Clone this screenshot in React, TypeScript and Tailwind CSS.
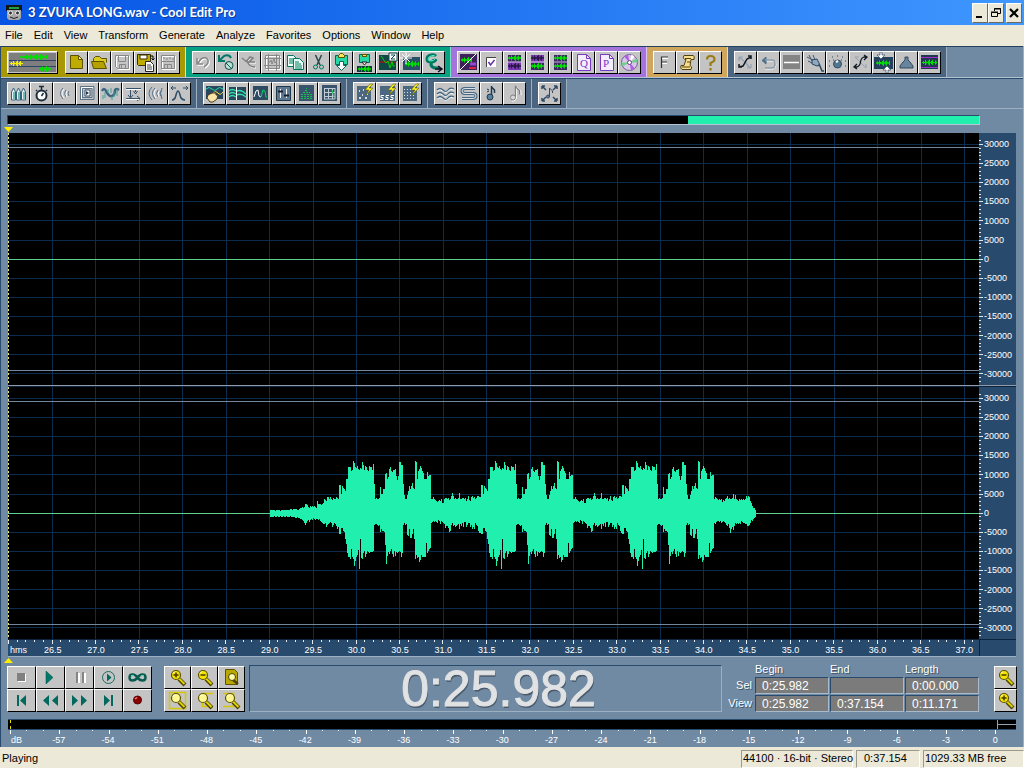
import React from 'react';

/* ---------- data ---------- */

const MENUS = ['File', 'Edit', 'View', 'Transform', 'Generate', 'Analyze', 'Favorites', 'Options', 'Window', 'Help'];

const AMPLITUDES = [30000, 25000, 20000, 15000, 10000, 5000, 0, -5000, -10000, -15000, -20000, -25000, -30000];
const SECONDS = Array.from({ length: 22 }, (_, i) => (26.5 + i * 0.5).toFixed(1));
const DECIBELS = Array.from({ length: 20 }, (_, i) => i * 3 - 57);

// plot geometry, one unit per pixel column
const PLOT_W = 971;
const PLOT_H = 252;
const MID = 126;
const SEC_X = 44;
const SEC_STEP = 43.43;
const AMP_STEP = 19.1;

// peaks above / below the zero line
const INTRO_UP = [3, 3, 3, 3, 3, 2, 3, 3, 3, 3, 2, 3, 3, 3, 3, 3, 3, 3, 3, 3, 4, 4, 3, 4, 4, 4, 4, 3, 3, 4, 5, 5, 6, 5, 6, 9, 9, 8, 6, 5, 7, 6, 7, 6, 7, 6, 5, 12, 9, 9, 9, 8, 9, 10, 14, 13, 12, 16, 16, 14, 16, 14, 13, 15, 14, 14, 16, 15, 14];
const INTRO_DOWN = [2, 2, 2, 2, 1, 2, 2, 1, 2, 2, 1, 2, 2, 1, 2, 2, 1, 2, 2, 2, 1, 2, 2, 2, 2, 3, 3, 2, 3, 3, 4, 4, 5, 6, 8, 10, 8, 6, 5, 7, 5, 4, 5, 3, 4, 5, 4, 4, 5, 4, 6, 7, 8, 9, 9, 8, 12, 10, 9, 8, 7, 8, 12, 10, 8, 9, 11, 14, 12];
const PHRASE_UP = [
  28, 28, 19, 27, 25, 24, 22,
  34, 34, 46, 46, 46, 42, 43, 52, 50, 46, 45, 47, 44, 43, 45, 44, 51, 48, 43, 47, 46, 43, 42, 47, 46, 46, 43, 49,
  29, 14, 15, 14, 14, 15, 26, 19, 19, 24, 24,
  39, 40, 34, 36, 44, 46, 42, 41, 43, 43, 44, 37, 33, 37, 51, 51, 48, 48,
  29, 18, 14, 14, 18, 22, 27, 24, 27, 30, 25,
  24, 52, 51, 34, 42, 44, 47, 45, 42, 40, 34, 34, 34, 41, 37, 38, 38,
  14, 14, 16, 14, 13, 12, 11, 12, 13, 12, 14, 10, 10, 14, 15, 15,
  14, 15, 13, 14, 17, 20, 17, 14, 15, 14, 14, 15, 20, 14, 14, 15, 15, 14, 15, 12, 14, 17, 13, 12, 16, 17, 15, 16, 14, 15, 17, 17, 16, 16,
];
const PHRASE_DOWN = [
  19, 19, 13, 13, 16, 17, 24,
  29, 38, 42, 42, 44, 34, 42, 44, 51, 46, 42, 40, 35, 54, 24, 43, 44, 38, 36, 42, 39, 36, 37, 38, 37, 37, 37, 36,
  10, 9, 9, 10, 11, 10, 17, 14, 16, 16, 17,
  30, 49, 41, 37, 39, 36, 34, 39, 42, 36, 41, 37, 38, 37, 36, 37, 42, 38,
  10, 8, 10, 9, 20, 21, 14, 23, 23, 19, 14,
  24, 44, 40, 43, 42, 47, 45, 40, 42, 42, 42, 42, 28, 38, 36, 34, 33,
  8, 7, 6, 7, 6, 7, 8, 5, 6, 9, 6, 7, 8, 9, 13, 11,
  11, 13, 17, 16, 10, 8, 11, 10, 12, 11, 10, 9, 14, 9, 11, 8, 12, 7, 7, 12, 10, 8, 8, 12, 10, 14, 12, 14, 8, 10, 11, 16, 18, 18,
];
const TAIL_UP = [14, 16, 15, 14, 13, 14, 13, 14, 11, 13, 12, 14, 15, 17, 14, 15, 14, 14, 15, 19, 14, 18, 14, 13, 12, 14, 13, 14, 13, 14, 13, 14, 17, 15, 17, 16, 12, 10, 7, 5, 5, 3];
const TAIL_DOWN = [8, 9, 7, 6, 6, 7, 6, 8, 7, 6, 7, 8, 10, 11, 9, 13, 18, 14, 12, 15, 11, 8, 9, 8, 9, 8, 9, 6, 7, 8, 8, 9, 9, 11, 11, 10, 8, 5, 6, 4, 3, 2];

const PEAKS_UP = [...INTRO_UP, ...PHRASE_UP, ...PHRASE_UP.slice(0, 141), ...PHRASE_UP.slice(0, 92), ...TAIL_UP];
const PEAKS_DOWN = [...INTRO_DOWN, ...PHRASE_DOWN, ...PHRASE_DOWN.slice(0, 141), ...PHRASE_DOWN.slice(0, 92), ...TAIL_DOWN];
const WAVE_PATH = PEAKS_UP.map((up, i) => `M${262.5 + i} ${MID - up}V${MID + 2 + PEAKS_DOWN[i]}`).join('');

/* ---------- icons, drawn on a 21 unit grid ---------- */

const BAR_HEIGHTS = [1, 3, 1, 5, 2, 1, 4, 6, 1, 3, 5, 1, 1, 4, 2, 1];

function Bars({ x, y, n, color = '#00e000' }: { x: number; y: number; n: number; color?: string }) {
  const d = BAR_HEIGHTS.slice(0, n).map((h, i) => `M${x + i + 0.5} ${y - h / 2}v${h}`).join('');
  return (
    <g stroke={color}>
      <path d={d} />
      <path d={`M${x} ${y}h${n}`} />
    </g>
  );
}

function Lens({ sign }: { sign?: '+' | '-' }) {
  return (
    <>
      <path d="M12 12l6 6" stroke="#4a4200" strokeWidth="4" />
      <path d="M12 11.500l5.500 5.500" stroke="#e0d000" strokeWidth="2" />
      <circle cx="9" cy="8" r="4.500" fill={sign ? '#f4e400' : '#fff890'} stroke="#5c5200" strokeWidth="1.200" />
      <path d="M6 6.500l2-2" stroke="#fff" />
      {sign && <path d="M6.500 8h5" stroke="#4a3a00" strokeWidth="1.500" />}
      {sign === '+' && <path d="M9 5.500v5" stroke="#4a3a00" strokeWidth="1.500" />}
    </>
  );
}

const Arcs = ({ heavy }: { heavy?: boolean }) => (
  <g stroke={heavy ? '#52708c' : '#5d7184'}>
    <path d="M12 7q-3 3 0 7M9 5q-5 5 0 11" />
    <path d="M13 8q-2 3 0 6M10 6q-4 4 0 9" stroke="#fff" />
    <path d="M15 8q-2 2 0 5" />
    {heavy && <path d="M6 4q-6 6 0 13M16 5q-3 5 0 11" />}
  </g>
);

const icons: Record<string, React.ReactNode> = {
  new: (
    <>
      <path d="M4.500 3.500h8l4 4v9h-12z" fill="#c0ac00" stroke="#5c5200" />
      <path d="M12.500 3.500v4h4z" fill="#f4ec80" stroke="#5c5200" />
    </>
  ),
  open: (
    <>
      <path d="M4.500 15.500v-9l2-2h4l2 2h5v4" fill="#dccb20" stroke="#5c5200" />
      <path d="M4.500 16.500l-2-7h12l3 7z" fill="#b5a200" stroke="#5c5200" />
    </>
  ),
  save: (
    <>
      <path d="M4.500 4.500h13v13h-11l-2-2z" stroke="#fff" />
      <path d="M3.500 3.500h13v13h-11l-2-2zM6.500 3.500v6h7v-6M7.500 16.500v-4h6v4M9.500 13v3" stroke="#888" />
    </>
  ),
  saveAs: (
    <>
      <path d="M2.500 2.500h13v11h-12l-1-1z" fill="#c0ac00" stroke="#383000" />
      <path d="M5 3h7v4H5z" fill="#fff" stroke="#383000" />
      <path d="M10.500 9.500h5l3 3v7h-8z" fill="#fff" stroke="#222" />
      <path d="M12 13h4M12 15h5M12 17h5" stroke="#444" />
      <path d="M15 4h3v4M16.500 6.500L18 8l1.500-1.500" stroke="#000" />
    </>
  ),
  saveSel: (
    <>
      <path d="M4.500 4.500h13v13h-13z" stroke="#fff" />
      <path d="M3.500 3.500h13v13h-13zM3 9.500h14M6.500 16.500v-4h7v4M9.500 13v3M5 6h2M8 7h2M11 6h2M14 7h2" stroke="#888" />
    </>
  ),
  undo: (
    <>
      <path d="M5 7v6h6M6 12l3-4q5-3 7 1 1 4-4 7" stroke="#fff" strokeWidth="1.500" />
      <path d="M4 6v6h6M5 11l3-4q5-3 7 1 1 4-4 7" stroke="#858585" strokeWidth="1.500" />
    </>
  ),
  undoAll: (
    <>
      <path d="M3 3v6h6M4 8l4-4q5-2 7 2" stroke="#00786a" strokeWidth="2" />
      <circle cx="13" cy="13.500" r="4" stroke="#0a5c50" />
      <circle cx="13" cy="13.500" r="2.500" fill="#b8e8d8" stroke="none" />
      <path d="M10 11l6 6" stroke="#0a5c50" />
    </>
  ),
  repeat: (
    <>
      <path d="M5 7l4 4h8M8 11l4-6 2 2M10 12q1 4 7 4" stroke="#fff" />
      <path d="M3 6l5 4h8M7 10l4-5 3 1-5 5q2 4 7 4" stroke="#808080" strokeWidth="1.500" />
    </>
  ),
  selAll: (
    <>
      <path d="M4.500 4.500h14v13h-14z" stroke="#fff" />
      <path d="M3.500 3.500h14v13h-14zM2 6.500h17M2 13.500h17M6.500 2v17M14.500 2v17M7 10h1l1-2 1 4 2-5 1 4 1-1" stroke="#888" />
    </>
  ),
  copy: (
    <>
      <path d="M2.500 3.500h6l3 3v8h-9z" fill="#eafff6" stroke="#007860" />
      <path d="M4 7h4M4 9h5M4 11h5" stroke="#007860" />
      <path d="M8.500 6.500h6l4 4v7h-10z" fill="#eafff6" stroke="#007860" />
      <path d="M10 10h4M10 12h6M10 14h7M10 16h7" stroke="#007860" />
    </>
  ),
  cut: (
    <>
      <path d="M7.500 3l4.500 10M13.500 3L9 13" stroke="#284848" strokeWidth="1.500" />
      <circle cx="7.500" cy="15" r="2" stroke="#007860" />
      <circle cx="13.500" cy="15" r="2" stroke="#007860" />
    </>
  ),
  paste: (
    <>
      <path d="M4.500 3.500h12v9h-12z" fill="#24d8a8" stroke="#006a58" />
      <path d="M7.500 5.500v-2l2-2h2l2 2v2z" fill="#f8e860" stroke="#5c5200" />
      <path d="M8.500 9.500h4v4h3l-5 5-5-5h3z" fill="#fff" stroke="#006a58" />
    </>
  ),
  mixPaste: (
    <>
      <path d="M5.500 2.500h10v8h-10z" fill="#24d8a8" stroke="#006a58" />
      <path d="M8.500 4.500v-2h4v2z" fill="#f8e860" stroke="#5c5200" />
      <path d="M8 10h5l-2.500 3z" fill="#fff" stroke="#222" />
      <path d="M3 14h15v6H3z" fill="#0c3c38" />
      <Bars x={4} y={17} n={13} />
    </>
  ),
  zeroCross: (
    <>
      <path d="M2 3h17v15H2z" fill="#104848" />
      <path d="M2 10h17" stroke="#e00000" />
      <path d="M4 4l5 7 2-2 2 7 2-7 1 5h2" stroke="#00d000" />
      <path d="M12 1h8v8h-8z" fill="#fff" stroke="#104848" />
      <path d="M14 3h4l-4 4h4" stroke="#104848" />
    </>
  ),
  trim: (
    <>
      <path d="M3 5h17v13H3z" fill="#2a5068" />
      <Bars x={5} y={12} n={14} />
      <path d="M6 0v12M0 6h12M2 2l8 8M10 2l-8 8" stroke="#fff" />
    </>
  ),
  script: (
    <>
      <path d="M13 4q-2-2-5-1-4 1-4 4t4 3q4 0 5-3M11 8q-3 2-3 5 1 3 5 3h4" stroke="#007860" strokeWidth="3" />
      <path d="M12 4q-2-1-4 0-3 1-3 3t3 2q3 0 4-2" stroke="#58f0c8" />
      <path d="M12 17h6M15 14l4 3-4 3" stroke="#112" strokeWidth="1.500" />
    </>
  ),
  editView: (
    <>
      <path d="M2 2h17v16H2z" fill="#40205c" />
      <Bars x={3} y={8} n={11} />
      <path d="M2 18L18 2" stroke="#fff" />
      <path d="M12 12h6" stroke="#9048d0" strokeWidth="3" />
      <path d="M11 16h7" stroke="#e02040" strokeWidth="2" />
    </>
  ),
  check: (
    <>
      <path d="M6 6h9v9H6z" fill="#fff" />
      <path d="M5.500 15V5.500H15" stroke="#444" />
      <path d="M7.500 10l2 3 4-5" stroke="#6830a8" strokeWidth="1.500" />
    </>
  ),
  rows1: (
    <>
      <path d="M4 3h13v15H4z" fill="#7838b0" />
      <path d="M4 3h13v7H4z" fill="#3c2860" />
      <Bars x={4} y={6} n={13} />
      <Bars x={4} y={14} n={13} color="#2c1848" />
      <path d="M3 10h15" stroke="#d8c8e8" />
    </>
  ),
  rows2: (
    <>
      <path d="M4 3h13v15H4z" fill="#7838b0" />
      <path d="M4 11h13v7H4z" fill="#3c2860" />
      <Bars x={4} y={6} n={13} color="#2c1848" />
      <Bars x={4} y={14} n={13} />
      <path d="M3 10h15" stroke="#d8c8e8" />
    </>
  ),
  rows3: (
    <>
      <path d="M4 3h13v15H4z" fill="#3c2860" />
      <Bars x={4} y={6} n={13} />
      <Bars x={4} y={14} n={13} />
      <path d="M3 10h15" stroke="#c8b0e0" />
    </>
  ),
  cue: (
    <>
      <path d="M4.500 2.500h9l4 4v12h-13z" fill="#f4ecff" stroke="#7838c0" />
      <path d="M13.500 2.500v4h4" stroke="#7838c0" />
      <text x="7" y="15" fontSize="11" fill="#7838c0" stroke="none" fontFamily="Liberation Serif, serif">Q</text>
    </>
  ),
  play: (
    <>
      <path d="M4.500 2.500h9l4 4v12h-13z" fill="#f4ecff" stroke="#7838c0" />
      <path d="M13.500 2.500v4h4" stroke="#7838c0" />
      <text x="7" y="15" fontSize="11" fill="#7838c0" stroke="none" fontFamily="Liberation Serif, serif">P</text>
    </>
  ),
  cd: (
    <>
      <circle cx="10.500" cy="10.500" r="8" fill="#d8c8e8" stroke="#7858a0" />
      <path d="M10.500 10.500L5 4.500l4-2zM10.500 10.500l5.500 6-4 2z" fill="#b060e0" stroke="none" />
      <path d="M10.500 10.500l7-4 1 4zM10.500 10.500l-7 4-1-4z" fill="#70d090" stroke="none" />
      <path d="M10.500 10.500l2-8 3 2z" fill="#fff" stroke="none" />
      <circle cx="10.500" cy="10.500" r="2" fill="#fff" stroke="#604080" />
    </>
  ),
  fft: (
    <>
      <path d="M7 6h7M7 11h6" stroke="#fff" strokeWidth="2" />
      <path d="M7.500 16V5H14M8 10h5" stroke="#333" strokeWidth="1.200" />
    </>
  ),
  scroll: (
    <>
      <path d="M7 3.500h9q2 0 1 4h-3l-1 6q3 1 1 4H5q-2-1-1-4h3l2-6q-4 0-2-4z" fill="#f8e090" stroke="#54400c" />
      <path d="M8 6.500h6M5 15h8M10 10h3" stroke="#54400c" />
    </>
  ),
  help: (
    <path d="M7 7.500q0-3.500 3.500-3.500 4 0 4 3.500 0 2-4 3.500v3M10.500 16v2.500" stroke="#9a7c10" strokeWidth="2.200" />
  ),
  shuffle: (
    <>
      <path d="M4 5l6 5 5 6M4 5h4M4 5v4M16 16h-4M16 16v-4" stroke="#93a2b0" strokeWidth="1.200" />
      <path d="M4 15l4-1 4-7 4-2M13 4h3v3M4 12v3h3" stroke="#101820" strokeWidth="1.500" />
    </>
  ),
  back: (
    <>
      <path d="M9 9h6q3 0 3 3.500T15 17H7" stroke="#fff" />
      <path d="M8 5L4 8.500 8 12z" fill="#52708c" stroke="#52708c" />
      <path d="M7 8h7q3 0 3 4t-3 4H7" stroke="#8b9bab" strokeWidth="1.500" />
    </>
  ),
  flat: (
    <>
      <path d="M2 3h17v14H2z" fill="#848484" />
      <path d="M3 10.500h15" stroke="#fff" strokeWidth="1.500" />
    </>
  ),
  plug: (
    <>
      <path d="M3 5l6 3M5 3l3 6M9 3l2 5M4 9l4 2" stroke="#40586e" />
      <path d="M8 8l5-1 3 6-3 1-5-2z" fill="#8fa8c0" stroke="#2c4660" />
      <path d="M14 13l2 1 2 5h2" stroke="#2c4660" strokeWidth="1.500" />
    </>
  ),
  knob: (
    <>
      <circle cx="10.500" cy="12" r="4" fill="#52768e" stroke="#34506a" />
      <path d="M9 10l2-1" stroke="#fff" strokeWidth="2" />
      <path d="M10 4h1M5 5h1M15 5h1M2 9h1M18 9h1M2 14h1M18 14h1M6 8h1M14 8h1" stroke="#34424e" />
    </>
  ),
  curve: (
    <>
      <path d="M5 5l11 11M5 5h4M16 16v-4" stroke="#93a2b0" />
      <path d="M4 15h3q3-1 3.500-5T14 5h3M14 3l3 2-3 3M7 12l-3 3 3 2" stroke="#101820" strokeWidth="1.300" />
    </>
  ),
  fit: (
    <>
      <path d="M1 5h19v12H1z" fill="#24425e" />
      <Bars x={3} y={11} n={14} />
      <path d="M7 0v3H4l4 4 4-4H9V0zM13 21v-3h-3l4-4 4 4h-3v3z" fill="#fff" stroke="#24425e" strokeWidth="0.600" />
    </>
  ),
  metro: <path d="M9 8V5h3v3l2 2 3 4v2H4v-2l3-4z" fill="#68849e" stroke="#30485e" />,
  limits: (
    <>
      <path d="M2 3h17v14H2z" fill="#203850" />
      <path d="M2 5.500h17M2 15.500h17" stroke="#a030c8" />
      <Bars x={3} y={10.500} n={15} />
    </>
  ),
  invert: (
    <>
      <path d="M3.500 17V9l2-4 2 4v8zM8.500 17V9l2-4 2 4v8zM13.500 17V9l2-4 2 4v8z" fill="#e8f4f4" stroke="#34607c" />
      <path d="M6 16V9M11 16V9M16 16V9" stroke="#48a8a0" strokeWidth="1.500" />
    </>
  ),
  timer: (
    <>
      <circle cx="10.500" cy="12.500" r="5" fill="#fff" stroke="#1c2c38" strokeWidth="2" />
      <path d="M10.500 3v4M8 3.500h5M5 7l1 1M16 7l-1 1M10.500 13l2-3" stroke="#1c2c38" strokeWidth="1.500" />
    </>
  ),
  echo: <Arcs />,
  echoRoom: (
    <>
      <path d="M3.500 17V3.500H17V16.500H3.500M5.500 15V5.500H15V14.500H5.500" stroke="#5c7286" />
      <path d="M4.500 16V4.500H16" stroke="#fff" />
      <path d="M8 7h5v6H8z" fill="#fff" stroke="#34506a" />
      <path d="M9 8v4l3-2z" fill="#20384c" />
    </>
  ),
  flanger: (
    <>
      <path d="M2 8q2-4 4 0 3 6 6 5t3-6q1-2 4 0" stroke="#3c6480" strokeWidth="2.500" />
      <path d="M3 12v4M5 9v6M8 6v4M11 5v5M14 8v6M17 6v7M12 13v4" stroke="#40a098" />
    </>
  ),
  delay: (
    <>
      <path d="M3 5.500h15M7.500 6v8M12.500 6v3M3 15.500h14" stroke="#34506a" />
      <path d="M5 12l2.500 3 2.500-3M10.500 8l2 3 2-3M14 13l3 2.500-3 2.500" stroke="#34506a" />
      <path d="M3 6.500h15M3 16.500h13" stroke="#fff" />
    </>
  ),
  reverb: <Arcs heavy />,
  sweep: (
    <>
      <path d="M3 17q3 0 4-5 2-8 4 0 1 5 5 5" stroke="#2c4c68" strokeWidth="1.500" />
      <path d="M2 5h5M14 5h5M4 3L2 5l2 2M17 3l2 2-2 2" stroke="#2c4c68" />
    </>
  ),
  handWave: (
    <>
      <path d="M2 3h17v13H2z" fill="#28465e" />
      <path d="M2 6q3-3 6 0t5 0 6 0" stroke="#20d8a0" />
      <path d="M9 10q3-3 5 0t5-1" stroke="#f0d850" />
      <path d="M4 12l4-2 4 0v2h2l-1 4-4 3H6l-3-4z" fill="#f8e4a8" stroke="#4c3810" />
    </>
  ),
  morph: (
    <>
      <path d="M2 4h17v13H2z" fill="#28465e" />
      <path d="M2 8q3-3 7 0M2 11q3-3 7 0M2 14q3-3 7 0M10 8q4-2 9 3M10 12q4-2 9 2" stroke="#30e0a8" strokeWidth="1.500" />
      <path d="M9.500 4v13" stroke="#fff" />
    </>
  ),
  sine: (
    <>
      <path d="M3 3h15v14H3z" fill="#2c4a62" />
      <path d="M4 14l2-6 2-1 1 6 2 1" stroke="#fff" />
      <path d="M11 14l2-7 2 1 1 6h1" stroke="#00d860" />
    </>
  ),
  eq: (
    <>
      <path d="M3.500 3.500h14v14h-14z" fill="#5c7890" stroke="#20384c" />
      <path d="M7.500 6v9M13.500 6v9" stroke="#fff" />
      <path d="M5 8.500h5M11 12.500h5" stroke="#102030" strokeWidth="2" />
    </>
  ),
  graphic: (
    <>
      <path d="M3 2h15v16H3z" fill="#38546c" />
      <path d="M5 15.500h11M5 13.500h11M5 11.500h11M7 9.500h7M9 7.500h3M10 5.500h1" stroke="#18c050" strokeDasharray="2 1" />
    </>
  ),
  grid: (
    <>
      <path d="M3 2h15v16H3z" fill="#38546c" />
      <path d="M5 5.500h11M5 9.500h11M5 13.500h11M5.500 5v11M9.500 5v11M13.500 5v11M5 16h11M16 5v11" stroke="#c0ccd4" />
      <path d="M13 7l2 7" stroke="#00c840" />
    </>
  ),
  click: (
    <>
      <path d="M3 3h14v15H3z" fill="#4c6880" />
      <path d="M5 8h1M8 12h1M5 15h2M11 15h2M13 11h1M9 7h1" stroke="#fff" strokeWidth="1.500" />
      <path d="M16 1l-5 6h4l-3 5 7-7h-4l4-4z" fill="#f8f020" stroke="#585000" strokeWidth="0.500" />
    </>
  ),
  hiss: (
    <>
      <path d="M3 3h15v15H3z" fill="#4c6880" />
      <path d="M7 12.500H4v2h2v2H3M12 12.500H9v2h2v2H8M17 12.500h-3v2h2v2h-3" stroke="#fff" />
      <path d="M16 1l-5 6h4l-3 5 7-7h-4l4-4z" fill="#f8f020" stroke="#585000" strokeWidth="0.500" />
    </>
  ),
  noise: (
    <>
      <path d="M3 3h14v15H3z" fill="#4c6880" />
      <path d="M4 6.500h8M4 9.500h12M4 12.500h12M4 15.500h12" stroke="#d8e4ec" strokeDasharray="1 2" />
      <path d="M16 1l-5 6h4l-3 5 7-7h-4l4-4z" fill="#f8f020" stroke="#585000" strokeWidth="0.500" />
    </>
  ),
  chorus: (
    <>
      <path d="M2 8q3-3 6 0t5 0 6-1M2 12q3-3 6 0t5 0 6-1M2 16q3-3 6 0t5 0 6-1" stroke="#fff" />
      <path d="M2 7q3-3 6 0t5 0 6-1M2 11q3-3 6 0t5 0 6-1M2 15q3-3 6 0t5 0 6-1" stroke="#3c6480" strokeWidth="1.200" />
    </>
  ),
  stretch: (
    <>
      <path d="M17 5.500H7q-3 0-3 2.500t3 2.500h8q3 0 3 2.500t-3 2.500H4" stroke="#486886" strokeWidth="3" />
      <path d="M17 5.500H7q-3 0-3 2.500t3 2.500h8q3 0 3 2.500t-3 2.500H4" stroke="#d8e0e8" />
    </>
  ),
  pitch: (
    <>
      <path d="M10.500 3v11M10.500 4l3 3v3" stroke="#20384c" strokeWidth="1.500" />
      <circle cx="9" cy="14" r="3" fill="#58809c" stroke="#20384c" />
      <path d="M6 6l2 1M6 9l2-1" stroke="#20384c" />
    </>
  ),
  note: (
    <>
      <path d="M12.500 4v11l-2 3H8M13 4l4 4v4" stroke="#fff" />
      <path d="M11.500 14V3.500l4 4v4" stroke="#808080" strokeWidth="1.300" />
      <circle cx="9" cy="14.500" r="2.500" fill="#d8d8d8" stroke="#808080" />
    </>
  ),
  expand: (
    <>
      <path d="M3 3l4 4M3 3h3M3 3v3M18 3l-4 4M18 3h-3M18 3v3M3 18l4-4M3 18h3M3 18v-3M18 18l-4-4M18 18h-3M18 18v-3" stroke="#304860" strokeWidth="1.500" />
      <path d="M10.500 5v9M10.500 5l3 3v2" stroke="#304860" />
      <circle cx="9" cy="13.500" r="1.500" fill="#58809c" stroke="#304860" />
    </>
  ),
  zoomIn: <Lens sign="+" />,
  zoomOut: <Lens sign="-" />,
  zoomFull: (
    <>
      <path d="M4.500 2.500h9l3 3v12h-12z" fill="#b8a800" stroke="#5c5200" />
      <path d="M12 13l5 4" stroke="#4a4200" strokeWidth="2.500" />
      <circle cx="11" cy="10" r="3.500" fill="#fffbb0" stroke="#4a4200" />
    </>
  ),
  zoomSel: (
    <>
      <path d="M2.500 2.500h16v16h-16z" stroke="#d8c800" strokeWidth="1.500" />
      <Lens />
    </>
  ),
  zoomLeft: (
    <>
      <path d="M19 3.500H8.500v13H19" stroke="#d8c800" strokeWidth="1.500" />
      <Lens />
    </>
  ),
  zoomRight: (
    <>
      <path d="M2 3.500h10.500v13H2" stroke="#d8c800" strokeWidth="1.500" />
      <Lens />
    </>
  ),
  stop: (
    <>
      <path d="M7 7h8v8H7z" fill="#fff" />
      <path d="M6 6h8v8H6z" fill="#808080" />
    </>
  ),
  playFwd: <path d="M6 4l7 6.500L6 17z" fill="#00786a" stroke="#0c4a44" strokeWidth="0.500" />,
  pause: (
    <>
      <path d="M8 6h3v10H8zM14 6h3v10h-3z" fill="#fff" />
      <path d="M7 5h2v11H7zM13 5h2v11h-2z" fill="#858585" />
    </>
  ),
  playView: (
    <>
      <circle cx="10.500" cy="10.500" r="6" stroke="#1c6c60" />
      <path d="M9 6.500l4.500 4-4.500 4z" fill="#006a5c" />
    </>
  ),
  loop: (
    <>
      <path d="M10.500 10.500q-2-3-5-3t-3 3 3 3 5-3q2-3 5-3t3 3-3 3-5-3z" stroke="#0a5c50" strokeWidth="2.500" />
      <path d="M4 8.500h3M14 8.500h3" stroke="#58d0b0" />
    </>
  ),
  toStart: <path d="M6 5h2v11H6zM15 5v11l-6-5.500z" fill="#00685c" />,
  rewind: <path d="M9 5v11l-6-5.500zM18 5v11l-6-5.500z" fill="#00685c" />,
  forward: <path d="M3 5v11l6-5.500zM12 5v11l6-5.500z" fill="#00685c" />,
  toEnd: <path d="M6 5v11l6-5.500zM13 5h2v11h-2z" fill="#00685c" />,
  record: (
    <>
      <circle cx="10.500" cy="10" r="4" fill="#8c0000" stroke="#5c0000" />
      <path d="M8 9l2-1.500" stroke="#ff8080" strokeWidth="1.500" />
    </>
  ),
};

/* ---------- small parts ---------- */

function ToolButton({ icon, width = 'w-[23px]' }: { icon: string; width?: string }) {
  return (
    <button
      aria-label={icon}
      className={`flex h-[23px] ${width} shrink-0 items-center justify-center border-t border-l border-r border-b border-t-white border-l-white border-r-black border-b-black bg-[#c4c4c4]`}
    >
      <svg viewBox="0 0 21 21" fill="none" className="h-[21px] w-[21px]">
        {icons[icon]}
      </svg>
    </button>
  );
}

function ToolGroup({ names, color, edge = 'border-r-[#9db0c2]', children }: { names: string[]; color: string; edge?: string; children?: React.ReactNode }) {
  return (
    <div className={`flex items-center border-r pr-[5px] pl-[6px] ${color} ${edge}`}>
      {children}
      {names.map((name) => (
        <ToolButton key={name} icon={name} />
      ))}
    </div>
  );
}

function MultitrackButton() {
  return (
    <button aria-label="Multitrack view" className="mr-[7px] h-[23px] w-[51px] border border-t-white border-l-white border-r-black border-b-black bg-[#c4c4c4] p-px">
      <svg viewBox="0 0 47 19" className="h-full w-full bg-[#7e7e7e]">
        <path d="M0 7.500h47M0 13.500h47" stroke="#2c4468" />
        <Bars x={11} y={4} n={15} />
        <Bars x={24} y={4} n={15} />
        <Bars x={1} y={10.500} n={13} color="#f0f000" />
        <Bars x={30} y={16} n={13} />
      </svg>
    </button>
  );
}

function Plot({ wave }: { wave?: boolean }) {
  return (
    <div className="flex min-w-0 flex-1 bg-black">
      <svg viewBox={`0 0 ${PLOT_W} ${PLOT_H}`} preserveAspectRatio="none" shapeRendering="crispEdges" className="h-0 min-h-full w-full">
        {SECONDS.map((s, i) => (
          <line key={s} x1={SEC_X + 0.5 + i * SEC_STEP} x2={SEC_X + 0.5 + i * SEC_STEP} y1={0} y2={PLOT_H} stroke="#0b2c4c" />
        ))}
        {AMPLITUDES.map((a, i) => (
          <line key={a} x1={0} x2={PLOT_W} y1={11.5 + i * AMP_STEP} y2={11.5 + i * AMP_STEP} stroke="#0b2c4c" />
        ))}
        <path d={`M0 14.500H${PLOT_W}M0 237.500H${PLOT_W}`} stroke="#71879d" />
        <path d={`M0 126.500H${PLOT_W}`} stroke="#5cd08c" />
        {wave && <path d={WAVE_PATH} stroke="#20efae" />}
        <path d={`M0.500 0V${PLOT_H}`} stroke="#e8e87c" strokeDasharray="2 2" />
      </svg>
    </div>
  );
}

function AmplitudeScale() {
  const ticks = Array.from({ length: 64 }, (_, i) => {
    const major = (i - 1) % 5 === 0;
    return `M0 ${7.68 + i * 3.82}h${major ? 4 : 2}`;
  }).join('');
  return (
    <div className="flex w-[37px] shrink-0 bg-[#284a6c] text-[9px] leading-[12px]">
      <svg viewBox="0 0 5 252" preserveAspectRatio="none" shapeRendering="crispEdges" className="h-0 min-h-full w-[5px]">
        <path d={ticks} stroke="#dfe7ee" />
      </svg>
      <div className="flex flex-col justify-between py-[5px]">
        {AMPLITUDES.map((a) => (
          <span key={a}>{a}</span>
        ))}
      </div>
    </div>
  );
}

const Triangle = ({ up }: { up?: boolean }) => (
  <svg viewBox="0 0 9 5" className="h-[5px] w-[9px]">
    <path d={up ? 'M0 5h9L4.500 0z' : 'M0 0h9L4.500 5z'} fill="#fff000" />
  </svg>
);

function TimeField({ labelledBy, value }: { labelledBy: string; value: string }) {
  return (
    <input
      aria-labelledby={labelledBy}
      defaultValue={value}
      className="h-[17px] w-full rounded-none border border-t-[#284a6c] border-l-[#284a6c] border-r-[#a9bbcb] border-b-[#a9bbcb] bg-[#7b7b7b] px-[6px] text-[12px] text-white outline-none"
    />
  );
}

const CAPTION_BTN = 'flex h-[20px] w-[16px] items-center justify-center border border-t-white border-l-white border-r-[#6d6a5c] border-b-[#6d6a5c] bg-[#ece9d8]';

/* ---------- page ---------- */

export default function App() {
  const rulerTicks = Array.from({ length: 112 }, (_, i) => `M${0.5 + i * 8.686 + 0.1} 0v${i % 5 === 0 ? 4 : 2}`).join('');
  const meterTicks = Array.from({ length: 61 }, (_, i) => `M${2.5 + i * 16.42} 0v${i % 3 === 0 ? 4 : 1}`).join('');

  return (
    <div className="flex min-h-screen w-full flex-col overflow-hidden bg-[#718aa3] text-[11px] text-white" style={{ fontFamily: '"Liberation Sans", Arial, sans-serif' }}>
      {/* title bar */}
      <header className="flex h-[25px] items-center bg-gradient-to-r from-[#0653e4] to-[#3f97ff] pr-[2px] pl-[6px]">
        <svg viewBox="0 0 16 16" className="h-4 w-4">
          <path d="M0 0h16v6H0z" fill="#101810" />
          <path d="M3 2h10v2H3z" fill="#20a048" />
          <path d="M1 5h14v8l-2 2H3l-2-2z" fill="#a8a8a8" />
          <circle cx="4.500" cy="8" r="2" fill="#333" stroke="#eee" />
          <circle cx="11.500" cy="8" r="2" fill="#333" stroke="#eee" />
          <path d="M4 12q4 3 8 0" fill="none" stroke="#222" />
        </svg>
        <h1 className="ml-[6px] flex-1 text-[13px] font-bold [text-shadow:1px_1px_0_#0a3aa0]" style={{ fontFamily: 'Lato, sans-serif' }}>
          3 ZVUKA LONG.wav - Cool Edit Pro
        </h1>
        <div className="flex text-black">
          <button aria-label="Minimize" className={CAPTION_BTN}>
            <svg viewBox="0 0 12 12" className="h-3 w-3"><path d="M2 9h6v2H2z" /></svg>
          </button>
          <button aria-label="Restore" className={CAPTION_BTN}>
            <svg viewBox="0 0 12 12" className="h-3 w-3" fill="none" stroke="#000">
              <path d="M4.500 4V1.500h6v5H8M4 2h7M1.500 5.500h6v4h-6zM1 5h7" />
            </svg>
          </button>
          <button aria-label="Close" className={`ml-[2px] ${CAPTION_BTN}`}>
            <svg viewBox="0 0 12 12" className="h-3 w-3"><path d="M2 2l8 8M10 2l-8 8" stroke="#000" strokeWidth="2.200" /></svg>
          </button>
        </div>
      </header>

      {/* menu */}
      <nav className="flex h-[21px] items-center gap-[11px] bg-[#ece9d8] px-[5px] text-black">
        {MENUS.map((m) => (
          <button key={m}>{m}</button>
        ))}
      </nav>

      <main className="flex flex-1 flex-col border-r border-l border-r-[#9db0c2] border-l-[#284a6c]">
        {/* toolbars */}
        <div className="flex h-[32px] border-t border-b border-t-[#23425f] border-b-[#b4c4d2]">
          <ToolGroup names={['new', 'open', 'save', 'saveAs', 'saveSel']} color="bg-[#a99806]" edge="border-r-[#efe58a]">
            <MultitrackButton />
          </ToolGroup>
          <ToolGroup
            names={['undo', 'undoAll', 'repeat', 'selAll', 'copy', 'cut', 'paste', 'mixPaste', 'zeroCross', 'trim', 'script']}
            color="bg-[#06a281]"
            edge="border-r-[#7be0c6]"
          />
          <ToolGroup names={['editView', 'check', 'rows1', 'rows2', 'rows3', 'cue', 'play', 'cd']} color="bg-[#a473dc]" edge="border-r-[#dcc4f4]" />
          <ToolGroup names={['fft', 'scroll', 'help']} color="bg-[#d0a65c]" edge="border-r-[#f2dcae]" />
          <ToolGroup names={['shuffle', 'back', 'flat', 'plug', 'knob', 'curve', 'fit', 'metro', 'limits']} color="bg-[#4b6581]" />
        </div>
        <div className="flex h-[31px] border-t border-b border-t-[#284a6c] border-b-[#9db0c2]">
          <ToolGroup names={['invert', 'timer', 'echo', 'echoRoom', 'flanger', 'delay', 'reverb', 'sweep']} color="bg-[#4b6581]" />
          <ToolGroup names={['handWave', 'morph', 'sine', 'eq', 'graphic', 'grid']} color="bg-[#4b6581]" />
          <ToolGroup names={['click', 'hiss', 'noise']} color="bg-[#4b6581]" />
          <ToolGroup names={['chorus', 'stretch', 'pitch', 'note']} color="bg-[#4b6581]" />
          <ToolGroup names={['expand']} color="bg-[#4b6581]" />
        </div>

        {/* visible range inside the whole file */}
        <div className="mt-[6px] mr-[43px] ml-[6px] flex h-[10px] border border-t-[#284a6c] border-l-[#284a6c] border-r-[#b4c4d2] border-b-[#b4c4d2] bg-black">
          <div className="ml-auto w-[30%] bg-[#20efae]" />
        </div>
        <div className="pt-[2px] pb-[1px] pl-[3px]">
          <Triangle />
        </div>

        {/* waveform, left and right channel */}
        <section className="mx-[7px] flex flex-1 flex-col">
          <div className="flex flex-1">
            <Plot />
            <AmplitudeScale />
          </div>
          <div className="h-[2px] border-t border-t-[#8f9aa4] bg-[#0c2440]" />
          <div className="flex flex-1">
            <Plot wave />
            <AmplitudeScale />
          </div>
          <div className="flex border-t border-b border-t-[#0c2440] border-b-[#9db0c2] bg-[#284a6c] text-[9px] leading-[12px]">
            <div className="min-w-0 flex-1">
              <svg viewBox="0 0 971 4" preserveAspectRatio="none" shapeRendering="crispEdges" className="h-[4px] w-full">
                <path d={rulerTicks} stroke="#e6edf3" />
              </svg>
              <div className="flex">
                <span className="w-[23px] shrink-0 pl-[2px]">hms</span>
                <div className="-mr-[7px] flex flex-1">
                  {SECONDS.map((s) => (
                    <span key={s} className="w-0 flex-1 text-center">{s}</span>
                  ))}
                </div>
              </div>
            </div>
            <div className="w-[37px] shrink-0 border-l border-l-[#0c2440]" />
          </div>
        </section>
        <div className="pt-[1px] pl-[3px]">
          <Triangle up />
        </div>

        {/* transport, zoom, clock, selection */}
        <section className="flex items-end px-[6px]">
          <div className="grid grid-cols-5">
            {['stop', 'playFwd', 'pause', 'playView', 'loop', 'toStart', 'rewind', 'forward', 'toEnd', 'record'].map((n) => (
              <ToolButton key={n} icon={n} width="w-[29px]" />
            ))}
          </div>
          <div className="ml-3 grid grid-cols-3">
            {['zoomIn', 'zoomOut', 'zoomFull', 'zoomSel', 'zoomLeft', 'zoomRight'].map((n) => (
              <ToolButton key={n} icon={n} width="w-[27px]" />
            ))}
          </div>
          <div className="mx-1 flex h-[47px] flex-1 items-center justify-center border border-t-[#284a6c] border-l-[#284a6c] border-r-[#9db0c2] border-b-[#9db0c2] pl-[26px] text-[50px] leading-none text-[#e0e2e4] [-webkit-text-stroke:1px_#e0e2e4] [text-shadow:1px_2px_0_#4a5a6a]">
            0:25.982
          </div>
          <div className="grid grid-cols-[28px_74px_74px_74px] gap-px [text-shadow:1px_1px_0_#3c546c]">
            <span />
            <span id="begin" className="h-[13px] leading-[13px]">Begin</span>
            <span id="end" className="h-[13px] leading-[13px]">End</span>
            <span id="length" className="h-[13px] leading-[13px]">Length</span>
            <span id="sel" className="pr-[2px] text-right leading-[17px]">Sel</span>
            <TimeField labelledBy="sel begin" value="0:25.982" />
            <TimeField labelledBy="sel end" value="" />
            <TimeField labelledBy="sel length" value="0:00.000" />
            <span id="view" className="pr-[2px] text-right leading-[17px]">View</span>
            <TimeField labelledBy="view begin" value="0:25.982" />
            <TimeField labelledBy="view end" value="0:37.154" />
            <TimeField labelledBy="view length" value="0:11.171" />
          </div>
          <div className="ml-[15px]">
            <ToolButton icon="zoomOut" />
            <ToolButton icon="zoomIn" />
          </div>
        </section>

        {/* level meter */}
        <section className="mx-[7px] mt-[7px] text-[9px]">
          <div className="flex h-[11px] border-t border-b border-t-[#284a6c] border-b-[#284a6c] bg-black pl-[2px]">
            <div className="flex-1 border-l border-dashed border-l-[#f0e000]" />
            <div className="flex w-[19px] flex-col justify-center border-l border-l-[#8fa3b6]">
              <div className="h-px bg-[#8fa3b6]" />
            </div>
          </div>
          <svg viewBox="0 0 1008 4" preserveAspectRatio="none" shapeRendering="crispEdges" className="h-[4px] w-full">
            <path d={meterTicks} stroke="#fff" />
          </svg>
          <div className="flex h-[13px] leading-[13px]">
            <span className="w-[26px] shrink-0 pl-[3px]">dB</span>
            <div className="-mr-1 flex flex-1">
              {DECIBELS.map((d) => (
                <span key={d} className="w-0 flex-1 text-center">{d}</span>
              ))}
            </div>
          </div>
        </section>
      </main>

      {/* status bar */}
      <footer className="flex h-[21px] items-stretch gap-[3px] bg-[#ece9d8] pt-[3px] text-black">
        <span className="flex-1 pl-[2px] leading-[17px]">Playing</span>
        <span className="w-[112px] border border-t-[#9d9a8a] border-l-[#9d9a8a] border-r-white border-b-white pl-px leading-[15px] whitespace-nowrap">44100 · 16-bit · Stereo</span>
        <span className="w-[64px] border border-t-[#9d9a8a] border-l-[#9d9a8a] border-r-white border-b-white pl-[7px] leading-[15px]">0:37.154</span>
        <span className="w-[101px] border border-t-[#9d9a8a] border-l-[#9d9a8a] border-r-white border-b-white pl-px leading-[15px] whitespace-nowrap">1029.33 MB free</span>
      </footer>
    </div>
  );
}
